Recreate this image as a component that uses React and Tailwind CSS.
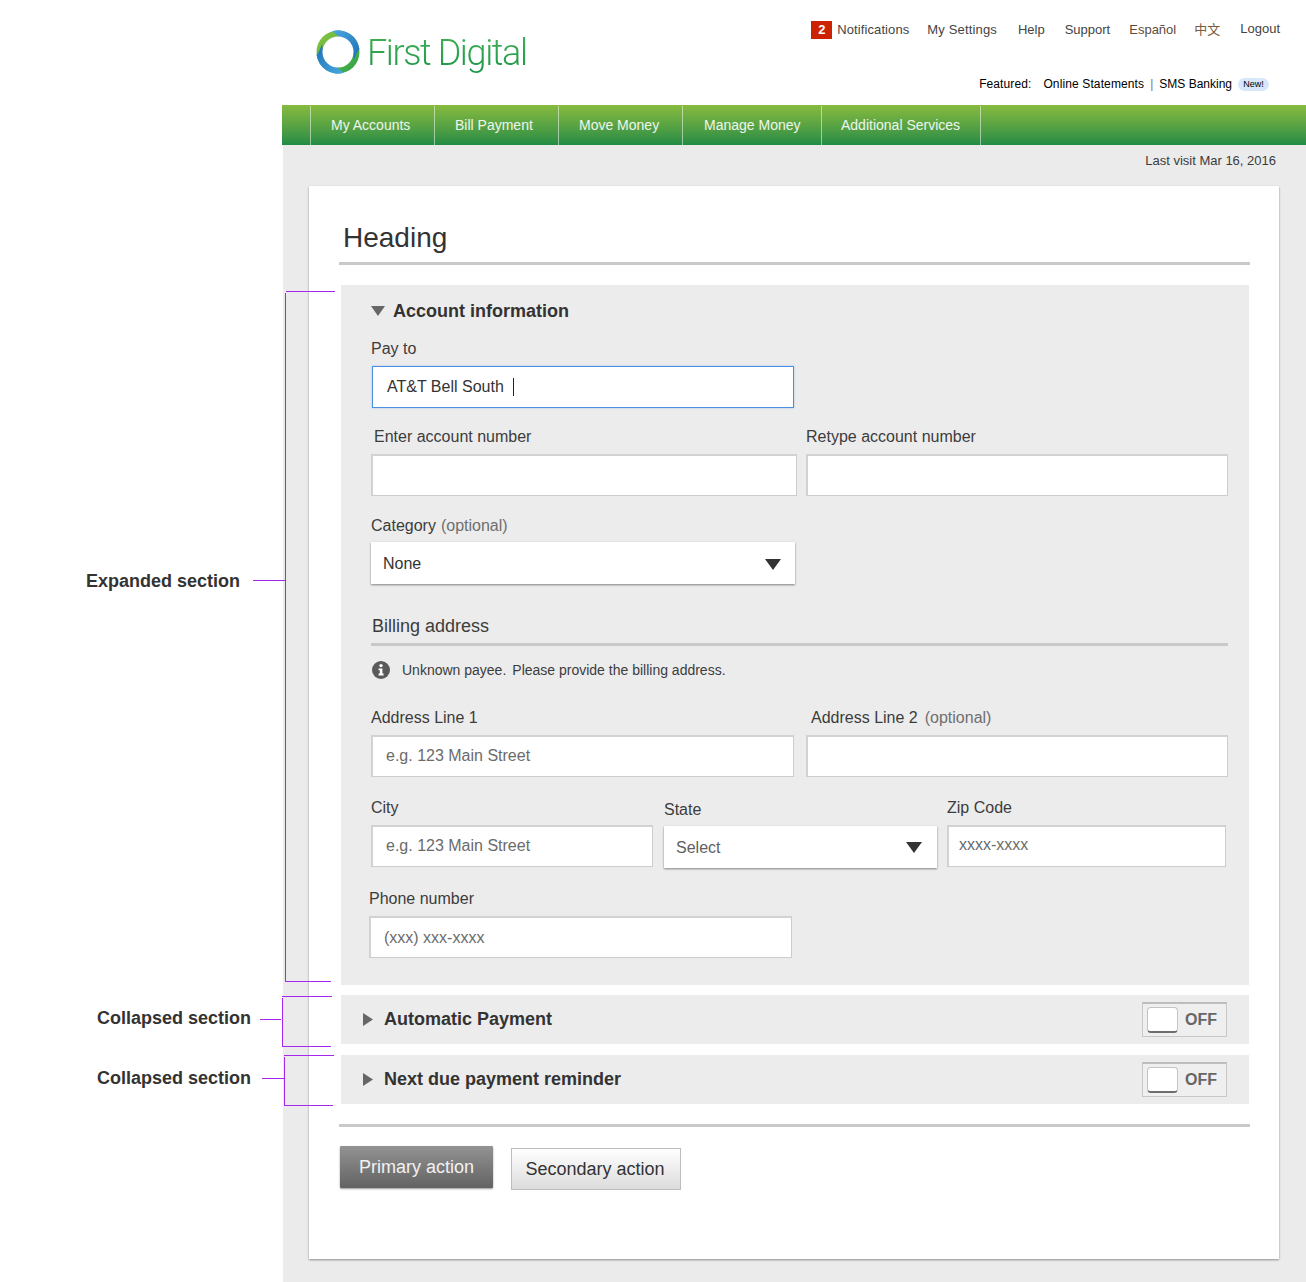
import React from "react";

const font = { fontFamily: '"Liberation Sans", "Noto Sans CJK SC", Arial, sans-serif' };

function Label({ children, optional, optionalGap = "ml-[7px]", className = "" }) {
  return (
    <div className={`h-[18px] leading-[18px] text-[16px] text-[#3c3c3c] whitespace-nowrap ${className}`}>
      {children}
      {optional && <span className={`${optionalGap} text-[#6f6f6f]`}>(optional)</span>}
    </div>
  );
}

function Input({ placeholder, className = "" }) {
  return (
    <div className={`h-[42px] bg-white border-2 border-[#d2d2d2] border-r-[#cccccc] border-b-[#cccccc] border-r border-b flex items-center text-[16px] text-[#6b6b6b] whitespace-nowrap ${className}`}>
      {placeholder}
    </div>
  );
}

function Select({ value, className = "", muted }) {
  return (
    <div className={`h-[42px] bg-white shadow-[0_1px_2px_rgba(0,0,0,0.45)] flex items-center justify-between pl-[12px] text-[16px] ${muted ? "text-[#5f5f5f] pr-[15px] pt-[1px]" : "text-[#333] pr-[14px] pt-[2px]"} ${className}`}>
      <span>{value}</span>
      <svg width="16" height="11" viewBox="0 0 16 11"><path d="M0 0H16L8 11Z" fill="#333" /></svg>
    </div>
  );
}

function Toggle() {
  return (
    <div className="w-[85px] h-[35px] bg-[#efefef] border border-[#c8c8c8] border-t-2 border-t-[#bdbdbd] flex items-center pl-[4px] gap-[7px]">
      <div className="w-[31px] h-[26px] bg-white rounded-[4px] border border-[#c4c4c4] border-b-2 border-b-[#6d6d6d]" />
      <span className="text-[16px] leading-none font-bold text-[#666]">OFF</span>
    </div>
  );
}

function Collapsed({ title, className = "" }) {
  return (
    <div className={`ml-[32px] w-[908px] h-[49px] bg-[#ececec] flex items-center pl-[22px] pr-[22px] ${className}`}>
      <svg width="10" height="13" viewBox="0 0 10 13" className="mr-[11px]"><path d="M0 0L10 6.5L0 13Z" fill="#666" /></svg>
      <span className="text-[18px] font-bold text-[#333] flex-1">{title}</span>
      <Toggle />
    </div>
  );
}

function Logo() {
  const swirl = "M17 2.2A21.5 21.5 0 0 1 44.4 20C42.5 22.5 40.5 26 39 31 38 21 33 13 25 8.5 22.5 6.5 20 4 17 2.2Z";
  return (
    <svg width="46" height="46" viewBox="0 0 46 46" className="shrink-0">
      <defs>
        <linearGradient id="blueArc" x1="0" y1="0" x2="1" y2="1">
          <stop offset="0" stopColor="#4aa8e0" />
          <stop offset="1" stopColor="#1b6fb7" />
        </linearGradient>
        <linearGradient id="greenArc" x1="0" y1="0" x2="1" y2="1">
          <stop offset="0" stopColor="#8cc63f" />
          <stop offset="1" stopColor="#2aa24a" />
        </linearGradient>
      </defs>
      <circle cx="23" cy="23" r="21.5" fill="url(#greenArc)" />
      <path d={swirl} fill="url(#blueArc)" />
      <path d={swirl} fill="url(#blueArc)" transform="rotate(180 23 23)" />
      <circle cx="23" cy="23" r="15.5" fill="white" />
    </svg>
  );
}

function Line({ className }) {
  return <div className={`absolute bg-[#a626ee] ${className}`} />;
}

function Note({ children, className }) {
  return <div className={`absolute text-[18px] leading-[20px] font-bold text-[#333] whitespace-nowrap ${className}`}>{children}</div>;
}

export default function App() {
  return (
    <div style={font} className="relative w-[1306px] h-[1282px] bg-white overflow-hidden pl-[282px]">
      {/* Header */}
      <header className="h-[105px] relative flex">
        <div className="ml-[33px] mt-[29px] flex items-start">
          <Logo />
          <span
            className="ml-[6px] -mt-[1px] text-[36px] leading-[50px] font-light tracking-[-1.4px] text-transparent bg-clip-text bg-gradient-to-b from-[#45b456] to-[#0f9347] whitespace-nowrap"
            style={{ fontFamily: 'Roboto, sans-serif' }}
          >
            First Digital
          </span>
        </div>
        <div className="flex-1 flex flex-col items-end pr-[27px]">
          <div className="mt-[21px] h-[18px] flex items-center text-[13px] text-[#444] whitespace-nowrap">
            <span className="w-[21px] h-[18px] bg-[#cc2200] text-white font-bold text-[13px] leading-[18px] text-center mr-[5px]">2</span>
            <span className="mr-[18px] tracking-[0.1px]">Notifications</span>
            <span className="mr-[21px] tracking-[0.15px]">My Settings</span>
            <span className="mr-[20px]">Help</span>
            <span className="mr-[19px]">Support</span>
            <span className="mr-[18px] text-[#5e4a3a]">Español</span>
            <span className="mr-[19px] text-[#7a5a3a]">中文</span>
            <span className="-translate-y-[1px] translate-x-[1px]">Logout</span>
          </div>
          <div className="mt-[38px] mr-[10px] h-[14px] flex items-center text-[12px] text-black whitespace-nowrap">
            <span className="mr-[12px] tracking-[0.1px]">Featured:</span>
            <span className="tracking-[0.12px]">Online Statements</span>
            <span className="mx-[6px] text-[#777]">|</span>
            <span>SMS Banking</span>
            <span className="ml-[6px] w-[31px] h-[13px] rounded-full bg-[#d6e6fb] text-[9px] leading-[13px] text-center">New!</span>
          </div>
        </div>
      </header>

      {/* Nav */}
      <nav className="h-[40px] pl-[28px] flex bg-gradient-to-b from-[#86bb3e] to-[#1f8c45] text-[14px] text-white/90 whitespace-nowrap">
        <div className="w-[124px] mt-[1px] border-l border-white/50 pl-[20px] leading-[38px]">My Accounts</div>
        <div className="w-[124px] mt-[1px] border-l border-white/50 pl-[20px] leading-[38px]">Bill Payment</div>
        <div className="w-[124px] mt-[1px] border-l border-white/50 pl-[20px] leading-[38px]">Move Money</div>
        <div className="w-[139px] mt-[1px] border-l border-white/50 pl-[21px] leading-[38px]">Manage Money</div>
        <div className="w-[160px] mt-[1px] border-l border-r border-white/50 pl-[19px] leading-[38px]">Additional Services</div>
      </nav>

      {/* Page body */}
      <div className="ml-[1px] h-[1137px] bg-[#ebebeb] pt-[8px]">
        <div className="h-[16px] leading-[16px] text-[13px] text-[#3c3c3c] text-right pr-[30px]">Last visit Mar 16, 2016</div>
        <main className="ml-[26px] mt-[17px] w-[970px] h-[1073px] bg-white shadow-[0_1px_2px_rgba(0,0,0,0.4)] pt-[1px]">
          <h1 className="ml-[34px] mt-[33px] h-[36px] text-[28px] leading-[36px] font-normal text-[#333]">Heading</h1>
          <div className="ml-[30px] mt-[6px] w-[911px] h-[3px] bg-[#c9c9c9]" />

          {/* Expanded section */}
          <section className="ml-[32px] mt-[20px] w-[908px] h-[700px] bg-[#ececec] pl-[30px] pt-[16px]">
            <div className="h-[20px] flex items-center">
              <svg width="14" height="10" viewBox="0 0 14 10" className="mr-[8px]"><path d="M0 0H14L7 10Z" fill="#666" /></svg>
              <span className="text-[18px] leading-[20px] font-bold text-[#333]">Account information</span>
            </div>
            <Label className="mt-[19px]">Pay to</Label>
            <div className="ml-[1px] mt-[8px] w-[422px] h-[42px] bg-white border border-[#4a90e2] flex items-center pl-[14px] text-[16px] text-[#333] shadow-[0_0_2px_rgba(74,144,226,0.4)]">
              AT&amp;T Bell South
              <span className="ml-[9px] w-px h-[18px] bg-[#222]" />
            </div>

            <div className="mt-[20px] flex">
              <Label className="ml-[3px] w-[432px]">Enter account number</Label>
              <Label>Retype account number</Label>
            </div>
            <div className="mt-[8px] flex gap-[9px]">
              <Input className="w-[426px]" />
              <Input className="w-[422px]" />
            </div>

            <Label className="mt-[21px]" optional optionalGap="ml-[5px]">Category</Label>
            <Select value="None" className="mt-[7px] w-[424px]" />

            <div className="ml-[1px] mt-[31px] h-[22px] leading-[22px] text-[18px] text-[#3c3c3c]">Billing address</div>
            <div className="mt-[6px] w-[857px] h-[3px] bg-[#c9c9c9]" />
            <div className="mt-[15px] ml-[1px] h-[18px] flex items-center text-[14px] text-[#3c3c3c]">
              <svg width="18" height="18" viewBox="0 0 18 18" className="mr-[12px]">
                <circle cx="9" cy="9" r="9" fill="#5a5a5a" />
                <circle cx="9" cy="4.6" r="1.7" fill="white" />
                <path d="M6.6 7.4H10.4V12.6H11.6V14.4H6.6V12.6H7.8V9.2H6.6Z" fill="white" />
              </svg>
              <span>Unknown payee.</span>
              <span className="ml-[6px]">Please provide the billing address.</span>
            </div>

            <div className="mt-[30px] flex">
              <Label className="w-[440px]">Address Line 1</Label>
              <Label optional>Address Line 2</Label>
            </div>
            <div className="mt-[8px] flex gap-[12px]">
              <Input className="w-[423px] pl-[13px] pb-[2px]" placeholder="e.g. 123 Main Street" />
              <Input className="w-[422px]" />
            </div>

            <div className="mt-[22px] flex">
              <Label className="w-[293px]">City</Label>
              <Label className="w-[283px] mt-[2px]">State</Label>
              <Label>Zip Code</Label>
            </div>
            <div className="mt-[6px] flex items-start">
              <Input className="w-[282px] pl-[13px] pb-[2px]" placeholder="e.g. 123 Main Street" />
              <Select muted value="Select" className="ml-[11px] mt-[1px] w-[273px]" />
              <Input className="ml-[10px] w-[279px] pl-[10px] pb-[4px] text-[15px]" placeholder="xxxx-xxxx" />
            </div>

            <Label className="-ml-[2px] mt-[22px]">Phone number</Label>
            <Input className="-ml-[2px] mt-[8px] w-[423px] pl-[13px]" placeholder="(xxx) xxx-xxxx" />
          </section>

          <Collapsed title="Automatic Payment" className="mt-[10px]" />
          <Collapsed title="Next due payment reminder" className="mt-[11px]" />

          <div className="ml-[30px] mt-[20px] w-[911px] h-[3px] bg-[#c9c9c9]" />

          <div className="ml-[31px] mt-[19px] flex items-start">
            <div className="w-[153px] h-[42px] bg-gradient-to-b from-[#939393] to-[#636363] text-white/90 text-[18px] leading-[42px] text-center shadow-[0_1px_2px_rgba(0,0,0,0.4)] rounded-[1px]">Primary action</div>
            <div className="ml-[18px] mt-[2px] w-[170px] h-[42px] pr-[2px] bg-gradient-to-b from-white to-[#dcdcdc] border border-[#bdbdbd] text-[#333] text-[18px] leading-[40px] text-center">Secondary action</div>
          </div>
        </main>
      </div>

      {/* Annotations */}
      <Note className="left-[86px] top-[571px]">Expanded section</Note>
      <Line className="left-[253px] top-[580px] w-[32px] h-px" />
      <Line className="left-[286px] top-[291px] w-[49px] h-px" />
      <Line className="left-[285px] top-[293px] w-px h-[689px]" />
      <Line className="left-[285px] top-[981px] w-[46px] h-px" />

      <Note className="left-[97px] top-[1008px]">Collapsed section</Note>
      <Line className="left-[260px] top-[1019px] w-[21px] h-px" />
      <Line className="left-[282px] top-[996px] w-[50px] h-px" />
      <Line className="left-[282px] top-[998px] w-px h-[48px]" />
      <Line className="left-[282px] top-[1046px] w-[49px] h-px" />

      <Note className="left-[97px] top-[1068px]">Collapsed section</Note>
      <Line className="left-[262px] top-[1078px] w-[22px] h-px" />
      <Line className="left-[284px] top-[1055px] w-[50px] h-px" />
      <Line className="left-[284px] top-[1057px] w-px h-[48px]" />
      <Line className="left-[284px] top-[1105px] w-[49px] h-px" />
    </div>
  );
}
